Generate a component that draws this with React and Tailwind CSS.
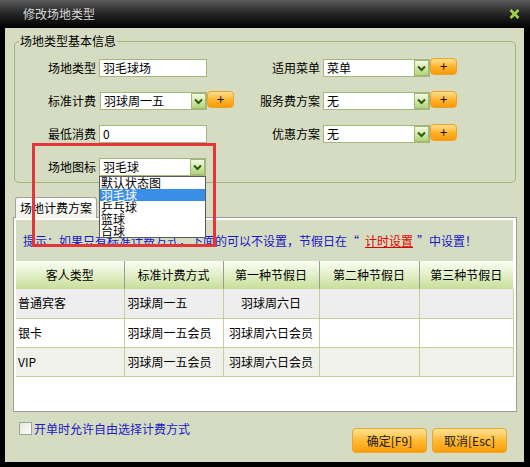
import React from "react";

// 下拉框右侧的绿色箭头按钮
const Arrow = () => (
    <div className="w-[15px] h-[16px] shrink-0 border border-[#9fb873] bg-gradient-to-b from-[#f4fbe2] to-[#b2d478] flex items-center justify-center">
        <svg width="9" height="7" viewBox="0 0 9 7">
            <path d="M1 1.5 L4.5 5 L8 1.5" fill="none" stroke="#2e5a0a" strokeWidth="2" />
        </svg>
    </div>
);

const Select = ({ value, className = "w-[108px]" }) => (
    <div className={`${className} h-[18px] shrink-0 border border-[#a6b67e] bg-white flex items-center pl-[3px]`}>
        <span className="flex-1 leading-[16px] truncate">{value}</span>
        <Arrow />
    </div>
);

const Input = ({ value }) => (
    <div className="w-[108px] h-[18px] border border-[#a6b67e] bg-white pl-[3px] leading-[16px]">{value}</div>
);

const Plus = () => (
    <div className="w-[27px] h-[17px] -mt-[1px] shrink-0 rounded-[4px] border border-[#eea02a] bg-gradient-to-b from-[#ffe08c] via-[#ffb52a] to-[#f89a04] flex justify-center text-[13px] leading-[13px] text-[#111]">
        +
    </div>
);

const Label = ({ children }) => <div className="text-right leading-[18px] h-[18px] whitespace-nowrap">{children}</div>;

const rows = [
    { type: "普通宾客", std: "羽球周一五", h1: "羽球周六日", bg: "bg-[#eeeeee]" },
    { type: "银卡", std: "羽球周一五会员", h1: "羽球周六日会员", bg: "bg-white" },
    { type: "VIP", std: "羽球周一五会员", h1: "羽球周六日会员", bg: "bg-[#f1f1ec]" },
];

const icons = ["默认状态图", "羽毛球", "乒乓球", "篮球", "台球"];

export default function App() {
    return (
        <div className="w-[530px] h-[467px] bg-black flex flex-col pb-[5px] text-[12px] text-black font-['Noto_Sans_CJK_SC',sans-serif]">
            {/* 标题栏 */}
            <div className="h-[27px] shrink-0 bg-gradient-to-b from-[#5c5c5c] via-[#262626] to-[#050505] flex items-center justify-between pl-[23px] pr-[10px]">
                <span className="text-[#d6d6d6] leading-[27px]">修改场地类型</span>
                <svg width="11" height="10" viewBox="0 0 11 10">
                    <path d="M1.5 1 L9.5 9 M9.5 1 L1.5 9" stroke="#9fd24a" strokeWidth="2.6" />
                </svg>
            </div>

            <div className="mt-[1px] ml-[5px] mr-[6px] flex-1 bg-[#d5dcc1] relative flex flex-col">
                {/* 基本信息分组 */}
                <div className="mt-[13px] ml-[9px] mr-[8px] border border-[#a3b47a] rounded-[5px] pb-[6px]">
                    <div className="-mt-[8px] ml-[4px] w-fit px-[1px] bg-[#d5dcc1] leading-[14px]">场地类型基本信息</div>
                    <div className="mt-[11px] grid grid-cols-[81px_164px_60px_1fr] gap-y-[15px] items-center">
                        <Label>场地类型</Label>
                        <div className="pl-[3px]"><Input value="羽毛球场" /></div>
                        <Label>适用菜单</Label>
                        <div className="pl-[3px] flex"><Select value="菜单" className="w-[107px]" /><Plus /></div>

                        <Label>标准计费</Label>
                        <div className="pl-[4px] flex"><Select value="羽球周一五" className="w-[107px]" /><Plus /></div>
                        <Label>服务费方案</Label>
                        <div className="pl-[3px] flex"><Select value="无" className="w-[107px]" /><Plus /></div>

                        <Label>最低消费</Label>
                        <div className="pl-[3px]"><Input value="0" /></div>
                        <Label>优惠方案</Label>
                        <div className="pl-[3px] flex"><Select value="无" className="w-[107px]" /><Plus /></div>

                        <Label>场地图标</Label>
                        <div className="pl-[3px]">
                            <div className="relative w-[107px]">
                                <Select value="羽毛球" className="w-[107px]" />
                                {/* 展开的下拉列表 */}
                                <div className="absolute left-0 top-full w-[107px] z-20 border border-[#5a5a5a] bg-white">
                                    {icons.map((name) => (
                                        <div
                                            key={name}
                                            className={`h-[12px] leading-[12px] pl-[1px] overflow-hidden ${name === "羽毛球" ? "bg-[#3a8ee6] text-white" : ""}`}
                                        >
                                            {name}
                                        </div>
                                    ))}
                                </div>
                            </div>
                        </div>
                        <div />
                        <div />
                    </div>
                </div>

                {/* 标签页 */}
                <div className="mt-[14px] ml-[10px] w-[82px] h-[21px] -mb-[1px] relative z-10 border border-b-0 border-[#a0a0a0] rounded-t-[3px] bg-gradient-to-b from-white to-[#f2f3ea] text-center leading-[20px]">
                    场地计费方案
                </div>
                <div className="ml-[8px] mr-[7px] h-[195px] border border-[#9c9c9c] bg-white pt-[2px] pl-[2px] pr-[3px]">
                    <div className="h-[41px] bg-[#d5dcc1] pl-[7px] flex items-center text-[#1717c6] whitespace-nowrap">
                        提示：如果只有标准计费方式，下面的可以不设置，节假日在“<span className="ml-[6px] mr-[4px] text-[#e30000] underline">计时设置</span>”中设置！
                    </div>
                    <table className="table-fixed border-collapse w-[497px]">
                        <colgroup>
                            <col className="w-[108px]" />
                            <col className="w-[99px]" />
                            <col className="w-[96px]" />
                            <col className="w-[100px]" />
                            <col className="w-[94px]" />
                        </colgroup>
                        <thead>
                            <tr className="h-[28px] bg-gradient-to-b from-[#fcfff4] to-[#c8de9a]">
                                {["客人类型", "标准计费方式", "第一种节假日", "第二种节假日", "第三种节假日"].map((h, i) => (
                                    <th key={h} className={`p-0 font-normal text-center ${i < 4 ? "border-r border-[#9a9a9a]" : ""}`}>
                                        {h}
                                    </th>
                                ))}
                            </tr>
                        </thead>
                        <tbody>
                            {rows.map((r) => (
                                <tr key={r.type} className={`h-[29px] ${r.bg}`}>
                                    <td className="pl-[2px] border-b border-r border-[#c6d09c]">{r.type}</td>
                                    <td className="pl-[3px] border-b border-r border-[#c6d09c] whitespace-nowrap">{r.std}</td>
                                    <td className="text-center border-b border-r border-[#c6d09c] whitespace-nowrap">{r.h1}</td>
                                    <td className="border-b border-r border-[#c6d09c]" />
                                    <td className="border-b border-r border-[#c6d09c]" />
                                </tr>
                            ))}
                        </tbody>
                    </table>
                </div>

                {/* 底部 */}
                <div className="flex-1 flex justify-between">
                    <label className="mt-[10px] ml-[14px] h-[13px] flex items-center gap-[2px] text-[#1a1ac8]">
                        <span className="w-[13px] h-[13px] border border-[#9ea592] bg-gradient-to-br from-[#e4e6dc] to-white" />
                        开单时允许自由选择计费方式
                    </label>
                    <div className="mt-[16px] mr-[17px] flex gap-[5px]">
                        <button className="w-[75px] h-[25px] rounded-[4px] border border-[#eba534] bg-gradient-to-b from-[#ffe392] via-[#ffbb30] to-[#fb9c00] text-[#1a1a1a]">
                            确定[F9]
                        </button>
                        <button className="w-[75px] h-[25px] rounded-[4px] border border-[#eba534] bg-gradient-to-b from-[#ffe392] via-[#ffbb30] to-[#fb9c00] text-[#1a1a1a]">
                            取消[Esc]
                        </button>
                    </div>
                </div>

                {/* 红色标注框 */}
                <div className="absolute left-[27px] top-[115px] w-[184px] h-[104px] border-[3px] border-[#e4353b] z-30 pointer-events-none" />
            </div>
        </div>
    );
}
